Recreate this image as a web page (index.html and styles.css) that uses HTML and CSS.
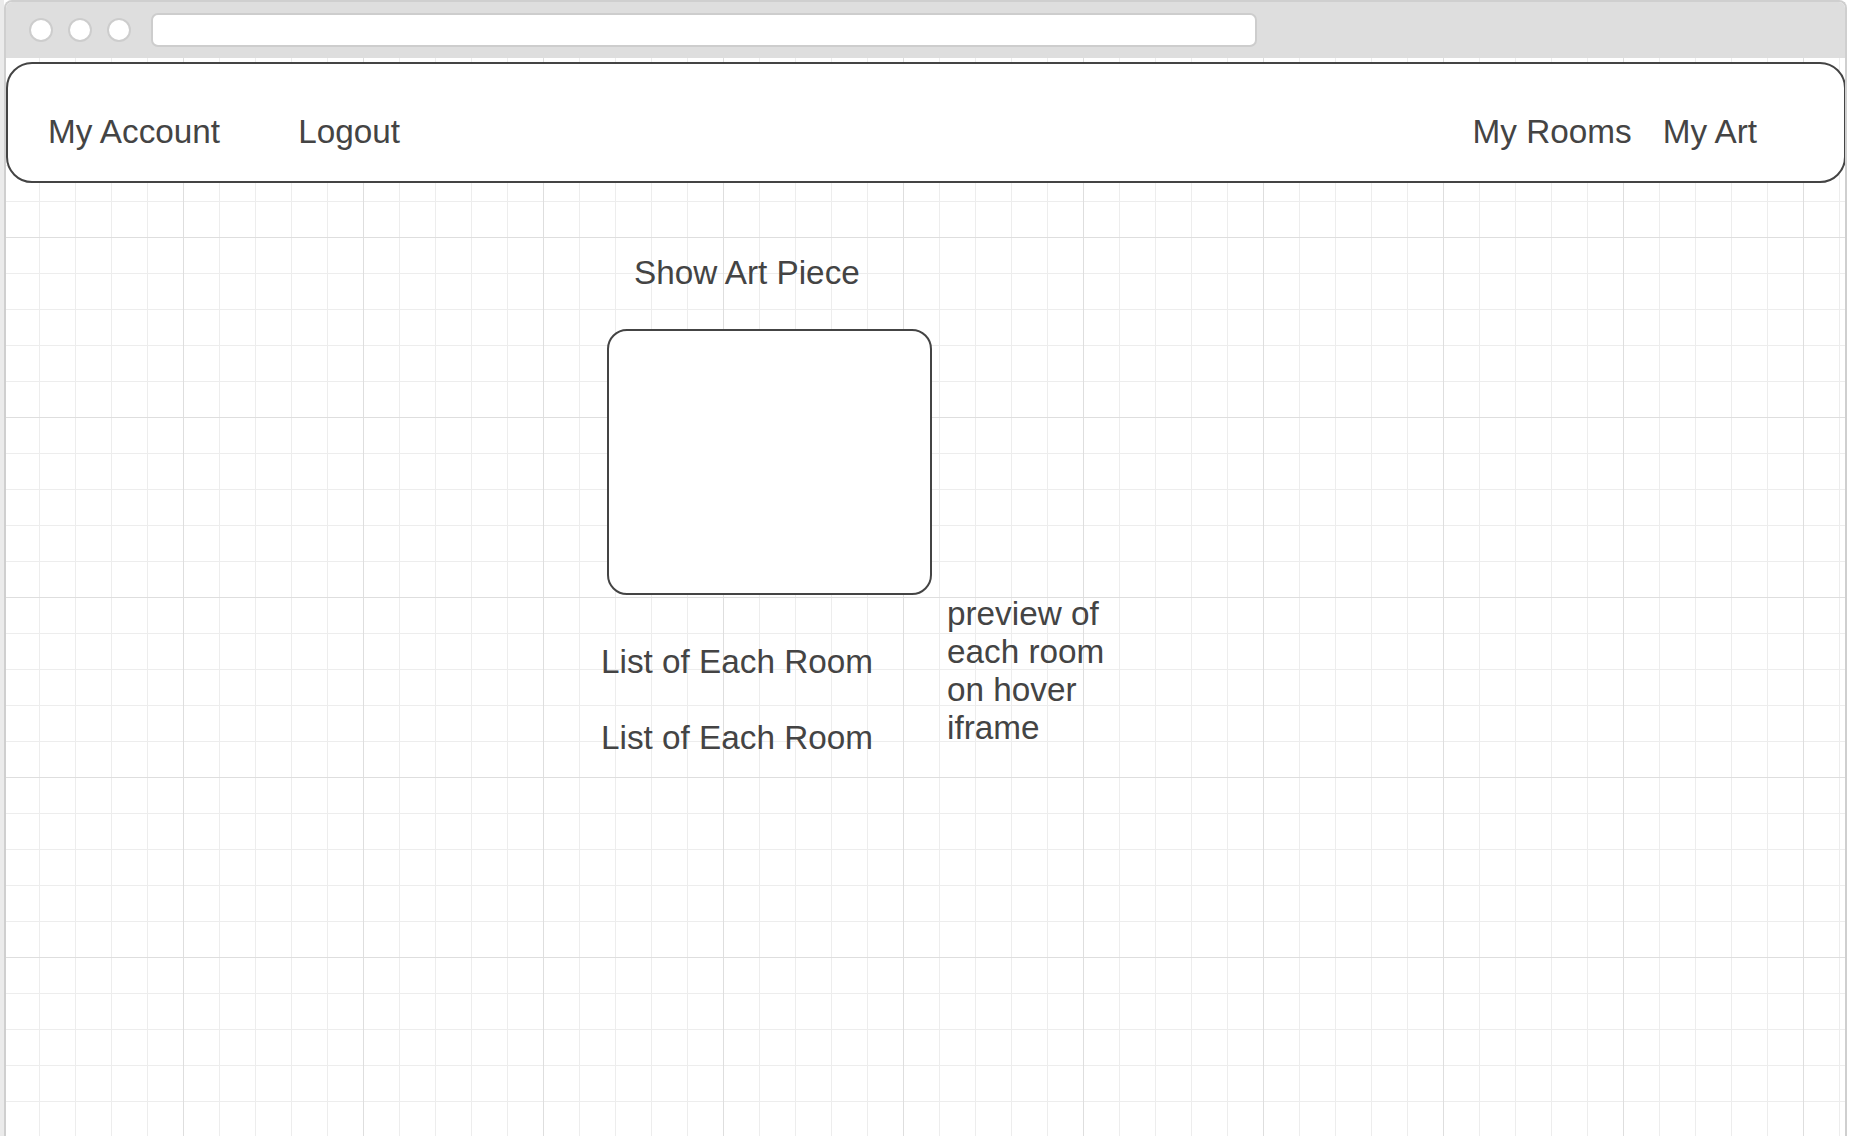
FILE: index.html
```html
<!DOCTYPE html>
<html lang="en">
<head>
<meta charset="UTF-8" />
<meta name="viewport" content="width=device-width, initial-scale=1" />
<title>Art Rooms</title>
<link rel="stylesheet" href="styles.css">
</head>
<body>

<div class="window">
  <!-- Browser bar -->
  <div class="titlebar">
    <span class="dot"></span>
    <span class="dot"></span>
    <span class="dot"></span>
    <div class="address"></div>
  </div>

  <div class="canvas">
    <!-- Top navigation -->
    <nav class="topnav">
      <div class="nav-group">
        <a class="nav-link" href="#">My Account</a>
        <a class="nav-link nav-logout" href="#">Logout</a>
      </div>
      <div class="nav-group">
        <a class="nav-link" href="#">My Rooms</a>
        <a class="nav-link nav-art" href="#">My Art</a>
      </div>
    </nav>

    <!-- Art piece -->
    <main class="art-page">
      <h2 class="art-title">Show Art Piece</h2>
      <div class="art-frame"></div>
      <div class="rooms">
        <ul class="room-list">
          <li>List of Each Room</li>
          <li>List of Each Room</li>
        </ul>
        <p class="room-preview">preview of each room on hover iframe</p>
      </div>
    </main>
  </div>
</div>

</body>
</html>
```

FILE: styles.css
```css
/* Base */
html, body {
  margin: 0;
  padding: 0;
}
body {
  background: linear-gradient(to right, #ebebeb 4px, #fff 4px);
  font-family: 'Liberation Sans', Arial, sans-serif;
  color: #444;
  overflow: hidden;
}

/* Browser window frame */
.window {
  margin-left: 4px;
  width: 1843px;
  min-height: 100vh;
  box-sizing: border-box;
  border: 2px solid #cfcfcf;
  border-bottom: none;
  border-radius: 8px 8px 0 0;
  background: #fff;
}
.titlebar {
  height: 56px;
  background: #dedede;
  border-radius: 6px 6px 0 0;
  display: flex;
  align-items: center;
  padding-left: 23px;
}
.dot {
  width: 24px;
  height: 24px;
  box-sizing: border-box;
  border-radius: 50%;
  border: 2px solid #cdcdcd;
  background: #fff;
  margin-right: 15px;
}
.address {
  margin-left: 5px;
  width: 1106px;
  height: 34px;
  box-sizing: border-box;
  border: 2px solid #cdcdcd;
  border-radius: 7px;
  background: #fff;
}

/* Grid paper */
.canvas {
  min-height: calc(100vh - 58px);
  overflow: hidden;
  background-color: #fff;
  background-image:
    linear-gradient(to right, #dedede 1px, transparent 1px),
    linear-gradient(to bottom, #dedede 1px, transparent 1px),
    linear-gradient(to right, #ededed 1px, transparent 1px),
    linear-gradient(to bottom, #ededed 1px, transparent 1px);
  background-size: 180px 180px, 180px 180px, 36px 36px, 36px 36px;
  background-position: 177px 0, 0 179px, 33px 0, 0 35px;
}

/* Nav */
.topnav {
  margin: 4px -1px 0 0;
  height: 121px;
  box-sizing: border-box;
  padding: 48.5px 87px 0 40px;
  border: 2px solid #444;
  border-radius: 26px;
  background: #fff;
  display: flex;
  justify-content: space-between;
}
.nav-group {
  display: flex;
}
.nav-link {
  color: #444;
  text-decoration: none;
  font-size: 33.3px;
  line-height: 38px;
}
.nav-logout {
  margin-left: 78px;
}
.nav-art {
  margin-left: 31px;
}

/* Main */
.art-page {
  padding: 70.5px 0 0 595px;
}
.art-title {
  margin: 0 0 0 33px;
  font-size: 33.3px;
  font-weight: normal;
  line-height: 38px;
}
.art-frame {
  margin: 37.5px 0 0 5.5px;
  width: 325px;
  height: 266px;
  box-sizing: border-box;
  border: 2px solid #444;
  border-radius: 20px;
  background: #fff;
}
.rooms {
  display: flex;
}
.room-list {
  list-style: none;
  margin: 0;
  padding: 48px 0 0 0;
  width: 346px;
}
.room-list li {
  font-size: 33.3px;
  line-height: 38px;
  margin-bottom: 38px;
}
.room-preview {
  margin: 0;
  width: 170px;
  font-size: 33.3px;
  line-height: 38px;
}
```
